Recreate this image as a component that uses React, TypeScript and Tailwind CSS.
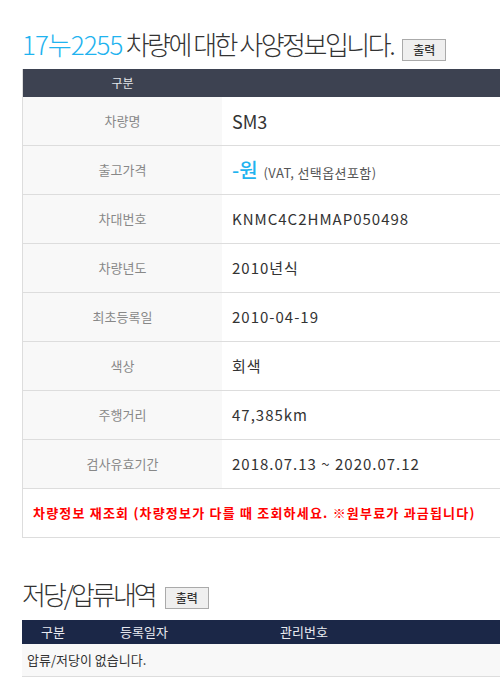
const FONT = "font-['Noto_Sans_CJK_KR','Noto_Sans',sans-serif]";

const SPEC: { label: string; value: React.ReactNode }[] = [
  { label: "차량명", value: <span className="text-[18px] tracking-normal text-[#333]">SM3</span> },
  {
    label: "출고가격",
    value: (
      <span className="flex items-baseline">
        <span className="text-[20px] font-medium tracking-normal text-[#1fb3ef]">-원</span>
        <span className="ml-[6px] text-[13px] tracking-[0.4px] text-[#555]">(VAT, 선택옵션포함)</span>
      </span>
    ),
  },
  { label: "차대번호", value: "KNMC4C2HMAP050498" },
  { label: "차량년도", value: "2010년식" },
  { label: "최초등록일", value: "2010-04-19" },
  { label: "색상", value: "회색" },
  { label: "주행거리", value: "47,385km" },
  { label: "검사유효기간", value: "2018.07.13 ~ 2020.07.12" },
];

function PrintButton() {
  return (
    <button className="h-[22px] w-[44px] border border-[#aaa] bg-[#efefef] text-[12px] font-medium leading-none text-[#333]">
      출력
    </button>
  );
}

export default function App() {
  return (
    <div className={`w-full overflow-hidden bg-white ${FONT}`}>
      <div className="w-[820px] pl-[22px] pt-[26px]">
        {/* 사양정보 */}
        <div className="flex items-end">
          <h2 className="text-[26px] font-light leading-[36px] tracking-[-2.5px] text-[#333]">
            <span className="tracking-[-1px] text-[#1fb3ef]">17누2255</span> 차량에 대한 사양정보입니다.
          </h2>
          <div className="mb-[1px] ml-[9px]">
            <PrintButton />
          </div>
        </div>
        <div className="mt-[7px] border-l border-[#ddd]">
          <div className="flex h-[28px] items-center bg-[#3d4251]">
            <div className="w-[199px] text-center text-[12px] text-[#e4e6ea]">구분</div>
          </div>
          {SPEC.map((r) => (
            <div key={r.label} className="flex h-[49px] border-b border-[#ddd]">
              <div className="flex w-[199px] items-center justify-center bg-[#f8f8f8] text-[13px] text-[#888]">
                {r.label}
              </div>
              <div className="flex items-center pl-[10px] text-[15px] tracking-[1px] text-[#333]">
                {r.value}
              </div>
            </div>
          ))}
          <div className="flex h-[49px] items-center border-b border-[#ddd] pl-[10px] text-[13px] font-bold tracking-[1.2px] text-[#ff0000]">
            차량정보 재조회 (차량정보가 다를 때 조회하세요. ※원부료가 과금됩니다)
          </div>
        </div>

        {/* 저당/압류내역 */}
        <div className="mt-[38px] flex items-end">
          <h2 className="text-[26px] font-light leading-[36px] tracking-[-3px] text-[#333]">저당/압류내역</h2>
          <div className="mb-[3px] ml-[10px]">
            <PrintButton />
          </div>
        </div>
        <div className="mt-[8px]">
          <div className="flex h-[24px] items-center bg-[#1b2747] text-[13px] text-[#e8eaf0]">
            <div className="w-[62px] text-center">구분</div>
            <div className="w-[160px] pl-[36px]">등록일자</div>
            <div className="pl-[36px]">관리번호</div>
          </div>
          <div className="flex h-[33px] items-center border-b border-[#ddd] bg-[#f8f8f8] pl-[5px] text-[13px] text-[#333]">
            압류/저당이 없습니다.
          </div>
        </div>
      </div>
    </div>
  );
}
